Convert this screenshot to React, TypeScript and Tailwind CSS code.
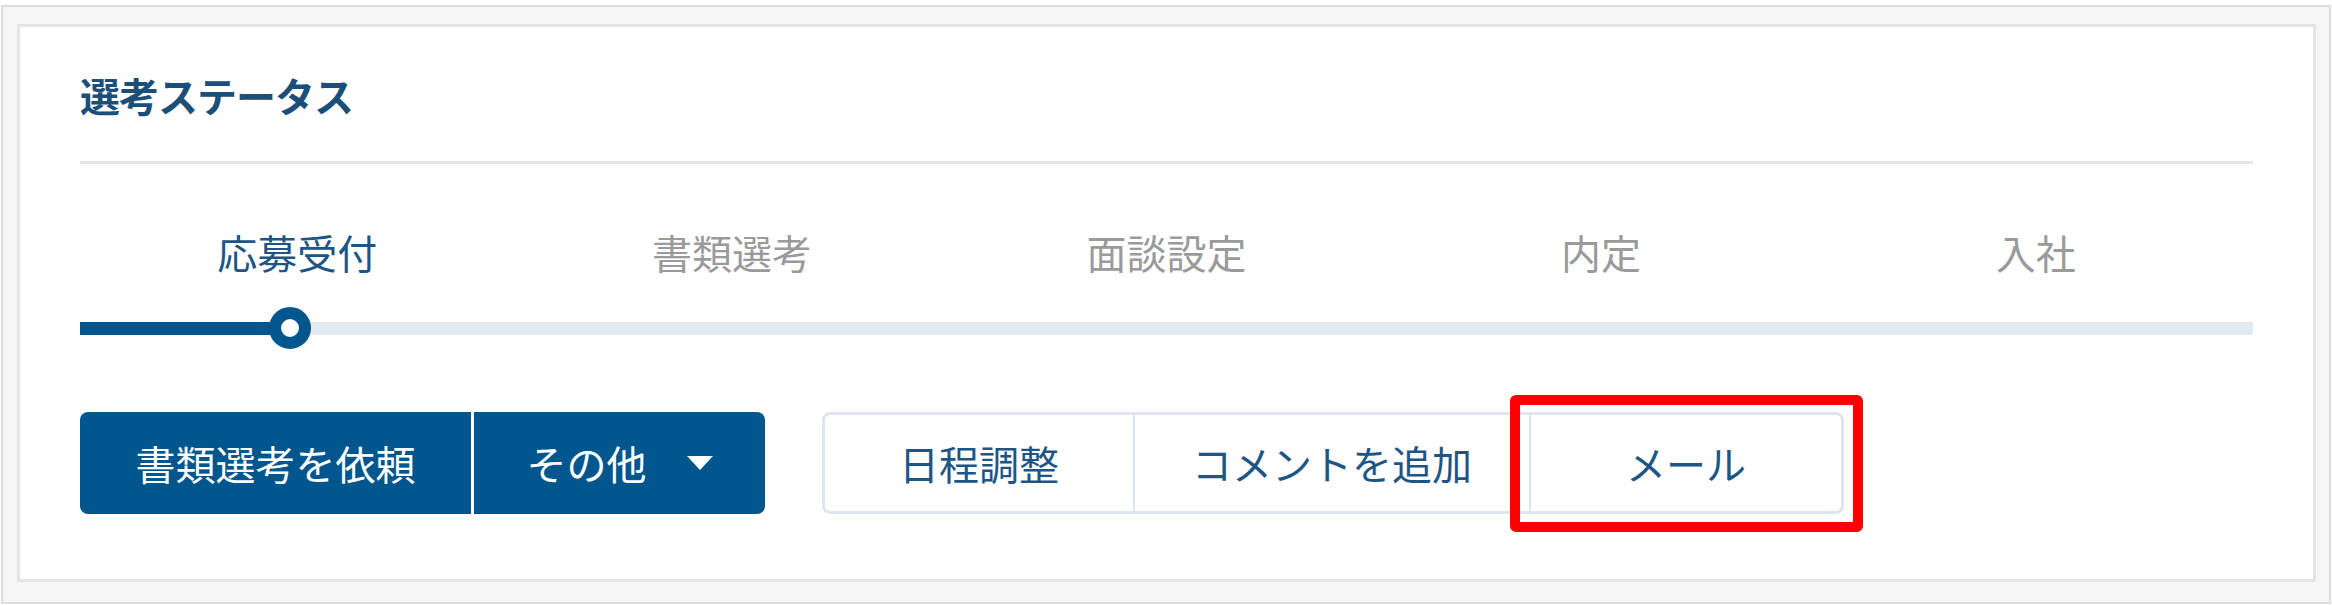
const steps = ['応募受付', '書類選考', '面談設定', '内定', '入社'];

const font = { fontFamily: '"Noto Sans CJK JP", "Noto Sans", sans-serif' };

export default function App() {
  return (
    <div className="relative h-[605px] w-[2332px] bg-white" style={font}>
      <div className="ml-[1px] pt-[5px]">
        <div className="h-[599px] w-[2330px] border-2 border-[#dcdcdc] bg-[#f5f5f5] pl-[14px] pt-[17px]">
          <div className="flex h-[558px] w-[2299px] flex-col border-[3px] border-[#e4e4e4] bg-white px-[60px] pt-[38px]">
            {/* title */}
            <h2 className="text-[40px] font-bold leading-[60px] tracking-[-1px] text-[#1b4e78]">選考ステータス</h2>
            <div className="mt-[36px] h-[3px] bg-[#e5e5e5]" />

            {/* step labels */}
            <div className="mt-[58px] grid grid-cols-5">
              {steps.map((s, i) => (
                <div
                  key={s}
                  className={
                    'text-center text-[40px] leading-[60px] ' +
                    (i === 0 ? 'text-[#1d5686]' : 'text-[#9a9a9a]')
                  }
                >
                  {s}
                </div>
              ))}
            </div>

            {/* progress track */}
            <div className="relative mt-[40px] h-[13px] bg-[#e3eaf0]">
              <div className="h-full w-[210px] bg-[#02568e]" />
              <div className="absolute left-[189px] top-[-15px] h-[42px] w-[42px] rounded-full border-[12px] border-[#02568e] bg-white" />
            </div>

            {/* actions */}
            <div className="mt-[77px] flex gap-[57px]">
              <div className="flex h-[102px] overflow-hidden rounded-[8px] bg-[#02568e] text-[40px] text-white">
                <button className="w-[391px]">書類選考を依頼</button>
                <button className="flex w-[294px] items-center justify-center gap-[40px] border-l-[3px] border-white">
                  <span>その他</span>
                  <svg width="26" height="14" viewBox="0 0 26 14">
                    <path d="M0 0h26L13 14z" fill="white" />
                  </svg>
                </button>
              </div>
              <div className="flex h-[102px] rounded-[8px] border-[3px] border-[#dde6ee] text-[40px] text-[#1d5686]">
                <button className="w-[308px]">日程調整</button>
                <button className="w-[396px] border-l-2 border-[#dde6ee]">コメントを追加</button>
                <button className="w-[312px] border-l-2 border-[#dde6ee]">メール</button>
              </div>
            </div>
          </div>
        </div>
      </div>

      {/* highlight */}
      <div className="absolute left-[1510px] top-[395px] h-[137px] w-[353px] rounded-[6px] border-[10px] border-[#ff0000]" />
    </div>
  );
}
